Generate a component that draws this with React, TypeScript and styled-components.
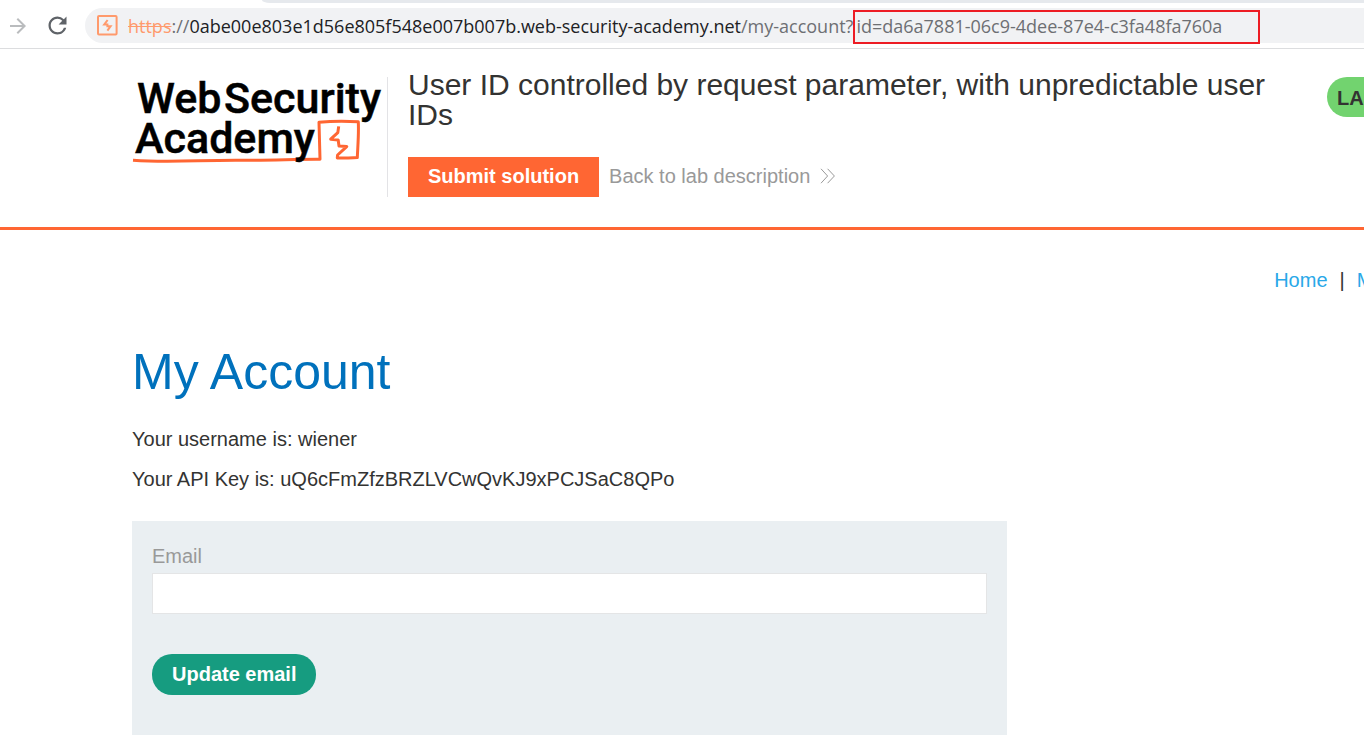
import React from 'react';
import styled, { createGlobalStyle } from 'styled-components';
import { MdArrowForward, MdRefresh } from 'react-icons/md';

const GlobalStyle = createGlobalStyle`
  *, *::before, *::after { box-sizing: border-box; }
  body {
    margin: 0;
    background: #fff;
    color: #333332;
    font-family: 'Liberation Sans', Arial, sans-serif;
    font-size: 20px;
    line-height: 24px;
  }
  h1, h2, p { margin: 0; font-weight: 400; }
`;

const Page = styled.div`
  display: flex;
  flex-direction: column;
  min-height: 100vh;
  overflow: hidden;
`;

const TabStrip = styled.div`
  height: 3px;
  margin-left: 262px;
  background: #e6e9ed;
  border-bottom-left-radius: 8px 3px;
`;

const Toolbar = styled.div`
  display: flex;
  align-items: center;
  height: 46px;
  padding-left: 5px;
  border-bottom: 1px solid #dcdddf;
`;

const ToolButton = styled.button<{ $tone: string }>`
  display: flex;
  flex: none;
  align-items: center;
  justify-content: center;
  width: 40px;
  height: 28px;
  padding: 0;
  border: 0;
  background: none;
  color: ${(p) => p.$tone};
  &:first-child { width: 26px; margin-right: 6px; }
`;

const AddressBar = styled.div`
  display: flex;
  flex: 1;
  align-items: center;
  gap: 10px;
  min-width: 0;
  height: 35px;
  margin-left: 8px;
  padding-left: 12px;
  border-radius: 18px 0 0 18px;
  background: #f1f2f4;
  font-family: 'Open Sans', 'Noto Sans', sans-serif;
  font-size: 18px;
  white-space: nowrap;
  color: #6d6f73;
`;

const Scheme = styled.s`
  color: #ff9a6c;
`;

const Host = styled.span`
  color: #202124;
`;

const Highlight = styled.span`
  position: relative;
  padding: 0 38px 0 3px;
  &::after {
    content: '';
    position: absolute;
    inset: -4px 0 -6px;
    border: 2px solid #ed1c24;
  }
`;

const Site = styled.div`
  width: calc(100% + 95px);
`;

const Header = styled.header`
  display: flex;
  align-items: flex-end;
  padding: 21px 0 30px 132px;
  border-bottom: 3px solid #ff6633;
`;

const LogoLink = styled.a`
  flex: none;
  width: 256px;
  height: 120px;
  border-right: 1px solid #e3e3e6;
  svg { display: block; overflow: visible; }
`;

const TitleColumn = styled.div`
  flex: 1;
  display: flex;
  flex-direction: column;
  gap: 27px;
  padding: 0 20px;
`;

const LabTitle = styled.h2`
  font-size: 30px;
  line-height: 30px;
`;

const Actions = styled.div`
  display: flex;
  align-items: center;
  gap: 10px;
`;

const SubmitButton = styled.button`
  height: 40px;
  padding: 0 20px 2px;
  border: 0;
  background: #ff6633;
  color: #fff;
  font: 700 20px/24px 'Liberation Sans', Arial, sans-serif;
`;

const BackLink = styled.a`
  display: flex;
  align-items: center;
  gap: 10px;
  padding-bottom: 2px;
  color: #999;
  text-decoration: none;
`;

const Status = styled.div`
  flex: none;
  width: 132px;
  height: 120px;
`;

const LabBadge = styled.span`
  display: block;
  height: 40px;
  padding: 0 10px;
  border-radius: 20px;
  background: #72d36f;
  font-weight: 700;
  line-height: 42px;
`;

const Nav = styled.nav`
  display: flex;
  justify-content: flex-end;
  gap: 12px;
  padding-top: 38px;
`;

const NavLink = styled.a`
  color: #29a8e8;
  text-decoration: none;
`;

const Content = styled.main`
  display: flex;
  flex: 1;
  flex-direction: column;
  padding-left: 132px;
`;

const Heading = styled.h1`
  margin: 50px 0 25px;
  color: #0071bc;
  font-size: 50px;
  line-height: 60px;
`;

const Detail = styled.p`
  padding-bottom: 16px;
`;

const EmailForm = styled.form`
  display: flex;
  flex: 1;
  flex-direction: column;
  align-items: flex-start;
  width: 71%;
  margin-top: 14px;
  padding: 23px 20px 40px;
  background: #eaeff2;
`;

const FieldLabel = styled.label`
  color: #999;
`;

const EmailInput = styled.input`
  width: 100%;
  height: 41px;
  margin: 5px 0 40px;
  padding: 0 10px;
  border: 1px solid #e4e5e6;
  background: #fff;
  font: inherit;
`;

const UpdateButton = styled.button`
  height: 41px;
  padding: 0 20px 1px;
  border: 0;
  border-radius: 20px;
  background: #169c80;
  color: #fff;
  font: 700 20px/24px 'Liberation Sans', Arial, sans-serif;
`;

const BurpIcon = () => (
  <svg width="21" height="21" viewBox="0 0 21 21" fill="none" aria-hidden="true">
    <rect x="1" y="1" width="18.6" height="18.6" rx="1" stroke="#ff9a6c" strokeWidth="2" />
    <path d="M10.6 5L7.2 9.6H10.4V11.2H13.6L10.4 15.6" stroke="#ff9a6c" strokeWidth="2" />
  </svg>
);

const Logo = () => (
  <svg width="250" height="90" viewBox="0 0 250 90">
    <path
      d="M1 83.2C40 86 70 82.6 112 83.2C140 83.4 165 82 188 82.2L187 45.2C200 44 214 44 226.3 44.7C226.9 57 225.8 69 225.3 80.6C219 81.4 211 80.7 205.3 81L205.6 78L214.7 69.6L207 69L206.2 63L198.7 62.2L205.8 55.6L206.7 49.4"
      fill="none"
      stroke="#ff6633"
      strokeWidth="3"
      strokeLinejoin="round"
    />
    <g fill="#000" stroke="#000" strokeWidth="0.5" fontFamily="Roboto, sans-serif" fontSize="43" fontWeight="500">
      <text x="5" y="36">Web</text>
      <text x="92" y="36">Security</text>
      <text x="3" y="76">Academy</text>
    </g>
  </svg>
);

const Chevrons = () => (
  <svg width="16" height="16" viewBox="0 0 16 16" fill="none" stroke="#999" aria-hidden="true">
    <path d="M1 .8L7.6 8 1 15.2M7.6 .8L14.4 8 7.6 15.2" />
  </svg>
);

export default function App() {
  return (
    <Page>
      <GlobalStyle />
      <TabStrip />
      <Toolbar>
        <ToolButton $tone="#babcbe" aria-label="Forward"><MdArrowForward size={24} /></ToolButton>
        <ToolButton $tone="#5f6368" aria-label="Reload"><MdRefresh size={27} /></ToolButton>
        <AddressBar>
          <BurpIcon />
          <span>
            <Scheme>https</Scheme>://<Host>0abe00e803e1d56e805f548e007b007b.web-security-academy.net</Host>
            /my-account?<Highlight>id=da6a7881-06c9-4dee-87e4-c3fa48fa760a</Highlight>
          </span>
        </AddressBar>
      </Toolbar>
      <Site>
        <Header>
          <LogoLink href="#" aria-label="Web Security Academy"><Logo /></LogoLink>
          <TitleColumn>
            <LabTitle>User ID controlled by request parameter, with unpredictable user IDs</LabTitle>
            <Actions>
              <SubmitButton>Submit solution</SubmitButton>
              <BackLink href="#">Back to lab description<Chevrons /></BackLink>
            </Actions>
          </TitleColumn>
          <Status><LabBadge>LAB</LabBadge></Status>
        </Header>
        <Nav>
          <NavLink href="#">Home</NavLink>
          <span>|</span>
          <NavLink href="#">My account</NavLink>
        </Nav>
      </Site>
      <Content>
        <Heading>My Account</Heading>
        <Detail>Your username is: wiener</Detail>
        <Detail>Your API Key is: uQ6cFmZfzBRZLVCwQvKJ9xPCJSaC8QPo</Detail>
        <EmailForm>
          <FieldLabel htmlFor="email">Email</FieldLabel>
          <EmailInput id="email" type="email" />
          <UpdateButton type="button">Update email</UpdateButton>
        </EmailForm>
      </Content>
    </Page>
  );
}
